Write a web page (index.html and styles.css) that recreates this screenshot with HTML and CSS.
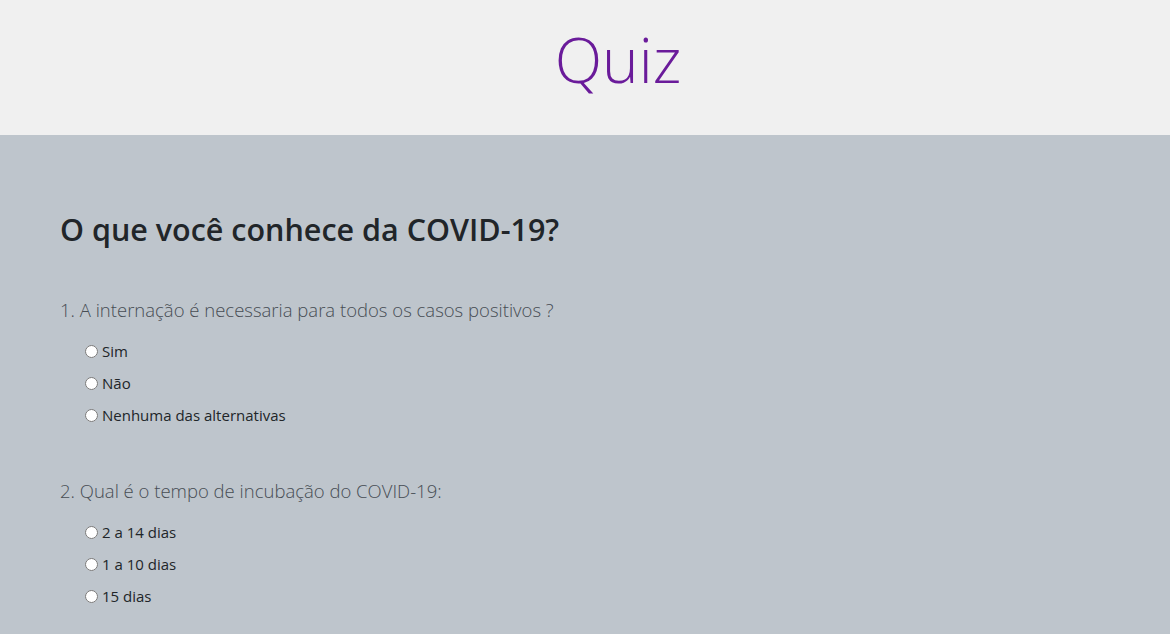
FILE: index.html
```html
<!DOCTYPE html>
<html lang="pt-BR">
<head>
<meta charset="utf-8">
<title>Quiz</title>
<link rel="stylesheet" href="styles.css">
</head>
<body>
<header class="top">
  <h1 class="title">Quiz</h1>
</header>
<main class="content">
  <h2 class="heading">O que você conhece da COVID-19?</h2>
  <section class="question">
    <p class="q-text">1. A internação é necessaria para todos os casos positivos ?</p>
    <label class="option"><input type="radio" name="q1"> Sim</label>
    <label class="option"><input type="radio" name="q1"> Não</label>
    <label class="option"><input type="radio" name="q1"> Nenhuma das alternativas</label>
  </section>
  <section class="question">
    <p class="q-text">2. Qual é o tempo de incubação do COVID-19:</p>
    <label class="option"><input type="radio" name="q2"> 2 a 14 dias</label>
    <label class="option"><input type="radio" name="q2"> 1 a 10 dias</label>
    <label class="option"><input type="radio" name="q2"> 15 dias</label>
  </section>
</main>
</body>
</html>
```
FILE: styles.css
```css
* { box-sizing: border-box; }
html, body { margin: 0; padding: 0; }
body {
  font-family: "Open Sans", "Noto Sans", sans-serif;
  background: #bec5cc;
  color: #212529;
  height: 634px;
  overflow: hidden;
}
.top {
  background: #f0f0f0;
  height: 135px;
  display: flex;
  align-items: center;
  justify-content: center;
}
.title {
  margin: 0;
  font-weight: 300;
  font-size: 62px;
  color: #6a1b9a;
  padding-left: 66px;
  line-height: 1;
  transform: translateY(-9px);
}
.content {
  padding: 75px 60px 0;
}
.heading {
  margin: 0 0 50px;
  font-size: 30.5px;
  font-weight: 600;
  line-height: 38px;
  color: #212529;
}
.question {
  display: flex;
  flex-direction: column;
  margin-bottom: 48px;
}
.q-text {
  margin: 0 0 13px;
  font-size: 18.5px;
  font-weight: 300;
  line-height: 24px;
  color: #474d54;
}
.option {
  display: flex;
  align-items: center;
  padding-left: 20px;
  font-size: 15px;
  line-height: 32px;
  height: 32px;
  color: #212529;
}
.option input {
  margin: 0 4px 0 5px;
  width: 13px;
  height: 13px;
}
```
